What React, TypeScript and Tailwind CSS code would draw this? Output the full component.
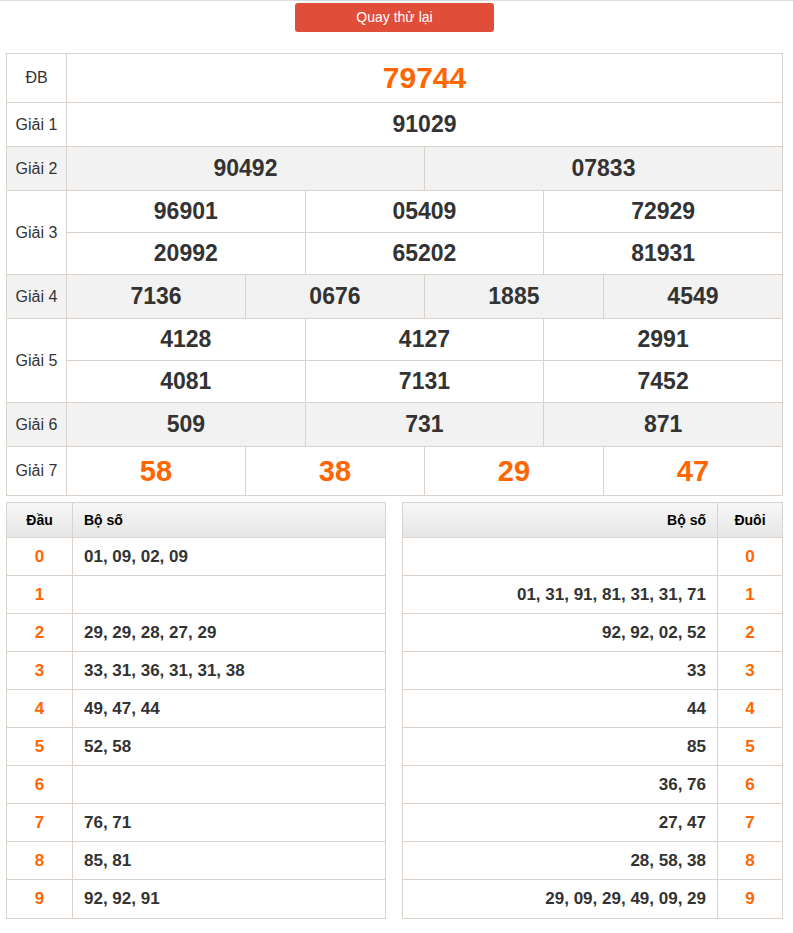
import React from 'react';

const ORANGE = 'text-[#ff6600]';

type Row = { label: string; rows: string[][]; gray?: boolean; size: 'db' | 'g7' | 'n'; h: string };

const prizes: Row[] = [
  { label: 'ĐB', rows: [['79744']], size: 'db', h: 'h-[49px]' },
  { label: 'Giải 1', rows: [['91029']], size: 'n', h: 'h-[44px]' },
  { label: 'Giải 2', rows: [['90492', '07833']], size: 'n', h: 'h-[44px]', gray: true },
  { label: 'Giải 3', rows: [['96901', '05409', '72929'], ['20992', '65202', '81931']], size: 'n', h: 'h-[42px]' },
  { label: 'Giải 4', rows: [['7136', '0676', '1885', '4549']], size: 'n', h: 'h-[44px]', gray: true },
  { label: 'Giải 5', rows: [['4128', '4127', '2991'], ['4081', '7131', '7452']], size: 'n', h: 'h-[42px]' },
  { label: 'Giải 6', rows: [['509', '731', '871']], size: 'n', h: 'h-[44px]', gray: true },
  { label: 'Giải 7', rows: [['58', '38', '29', '47']], size: 'g7', h: 'h-[49px]' },
];

const dau = ['01, 09, 02, 09', '', '29, 29, 28, 27, 29', '33, 31, 36, 31, 31, 38', '49, 47, 44', '52, 58', '', '76, 71', '85, 81', '92, 92, 91'];
const duoi = ['', '01, 31, 91, 81, 31, 31, 71', '92, 92, 02, 52', '33', '44', '85', '36, 76', '27, 47', '28, 58, 38', '29, 09, 29, 49, 09, 29'];

const span = (n: number) => (n === 1 ? 12 : n === 2 ? 6 : n === 3 ? 4 : 3);

const numClass = (size: Row['size']) =>
  size === 'db'
    ? `text-[30px] ${ORANGE}`
    : size === 'g7'
    ? `text-[29px] ${ORANGE}`
    : 'text-[23px] text-[#333]';

const PrizeTable = () => (
  <table className="w-[777px] table-fixed border-collapse">
    <colgroup>
      <col className="w-[60px]" />
      {Array.from({ length: 12 }).map((_, i) => (
        <col key={i} />
      ))}
    </colgroup>
    <tbody>
      {prizes.map((p) =>
        p.rows.map((r, ri) => (
          <tr key={p.label + ri} className={`${p.h} ${p.gray ? 'bg-[#f2f2f2]' : 'bg-white'}`}>
            {ri === 0 && (
              <td
                rowSpan={p.rows.length}
                className="border border-[#d9d3cb] text-center text-[16px] text-[#333]"
              >
                {p.label}
              </td>
            )}
            {r.map((n, ni) => (
              <td
                key={ni}
                colSpan={span(r.length)}
                className={`border border-[#d9d3cb] text-center font-bold leading-none ${numClass(p.size)}`}
              >
                {n}
              </td>
            ))}
          </tr>
        ))
      )}
    </tbody>
  </table>
);

const LotoTable = ({ side }: { side: 'left' | 'right' }) => {
  const data = side === 'left' ? dau : duoi;
  const head = 'h-[35px] border border-[#d9d3cb] text-[14px] font-bold text-black';
  return (
    <table className="w-full table-fixed border-collapse">
      <colgroup>
        {side === 'left' ? (
          <>
            <col className="w-[66px]" />
            <col />
          </>
        ) : (
          <>
            <col />
            <col className="w-[65px]" />
          </>
        )}
      </colgroup>
      <thead>
        <tr className="bg-gradient-to-b from-[#f7f7f7] to-[#e6e6e6]">
          {side === 'left' ? (
            <>
              <th className={`${head} text-center`}>Đầu</th>
              <th className={`${head} pl-[11px] text-left`}>Bộ số</th>
            </>
          ) : (
            <>
              <th className={`${head} pr-[11px] text-right`}>Bộ số</th>
              <th className={`${head} text-center`}>Đuôi</th>
            </>
          )}
        </tr>
      </thead>
      <tbody>
        {data.map((v, i) => (
          <tr key={i} className={`${i === 9 ? 'h-[39px]' : 'h-[38px]'} bg-white`}>
            {side === 'left' ? (
              <>
                <td className={`border border-[#d9d3cb] text-center text-[17px] font-bold ${ORANGE}`}>{i}</td>
                <td className="border border-[#d9d3cb] pl-[11px] text-left text-[17px] font-bold text-[#333]">{v}</td>
              </>
            ) : (
              <>
                <td className="border border-[#d9d3cb] pr-[11px] text-right text-[17px] font-bold text-[#333]">{v}</td>
                <td className={`border border-[#d9d3cb] text-center text-[17px] font-bold ${ORANGE}`}>{i}</td>
              </>
            )}
          </tr>
        ))}
      </tbody>
    </table>
  );
};

export default function App() {
  return (
    <div className="min-h-[933px] w-[793px] border-t border-[#dde0da] bg-white font-['Liberation_Sans',Arial,sans-serif]">
      <div className="flex pl-[295px] pt-[2px]">
        <button className="h-[29px] w-[199px] rounded-[3px] bg-[#e04e39] text-[14px] text-white">
          Quay thử lại
        </button>
      </div>
      <div className="mt-[21px] pl-[6px]">
        <PrizeTable />
      </div>
      <div className="mt-[6px] flex gap-[16px] pl-[6px]">
        <div className="w-[380px]">
          <LotoTable side="left" />
        </div>
        <div className="w-[381px]">
          <LotoTable side="right" />
        </div>
      </div>
    </div>
  );
}
